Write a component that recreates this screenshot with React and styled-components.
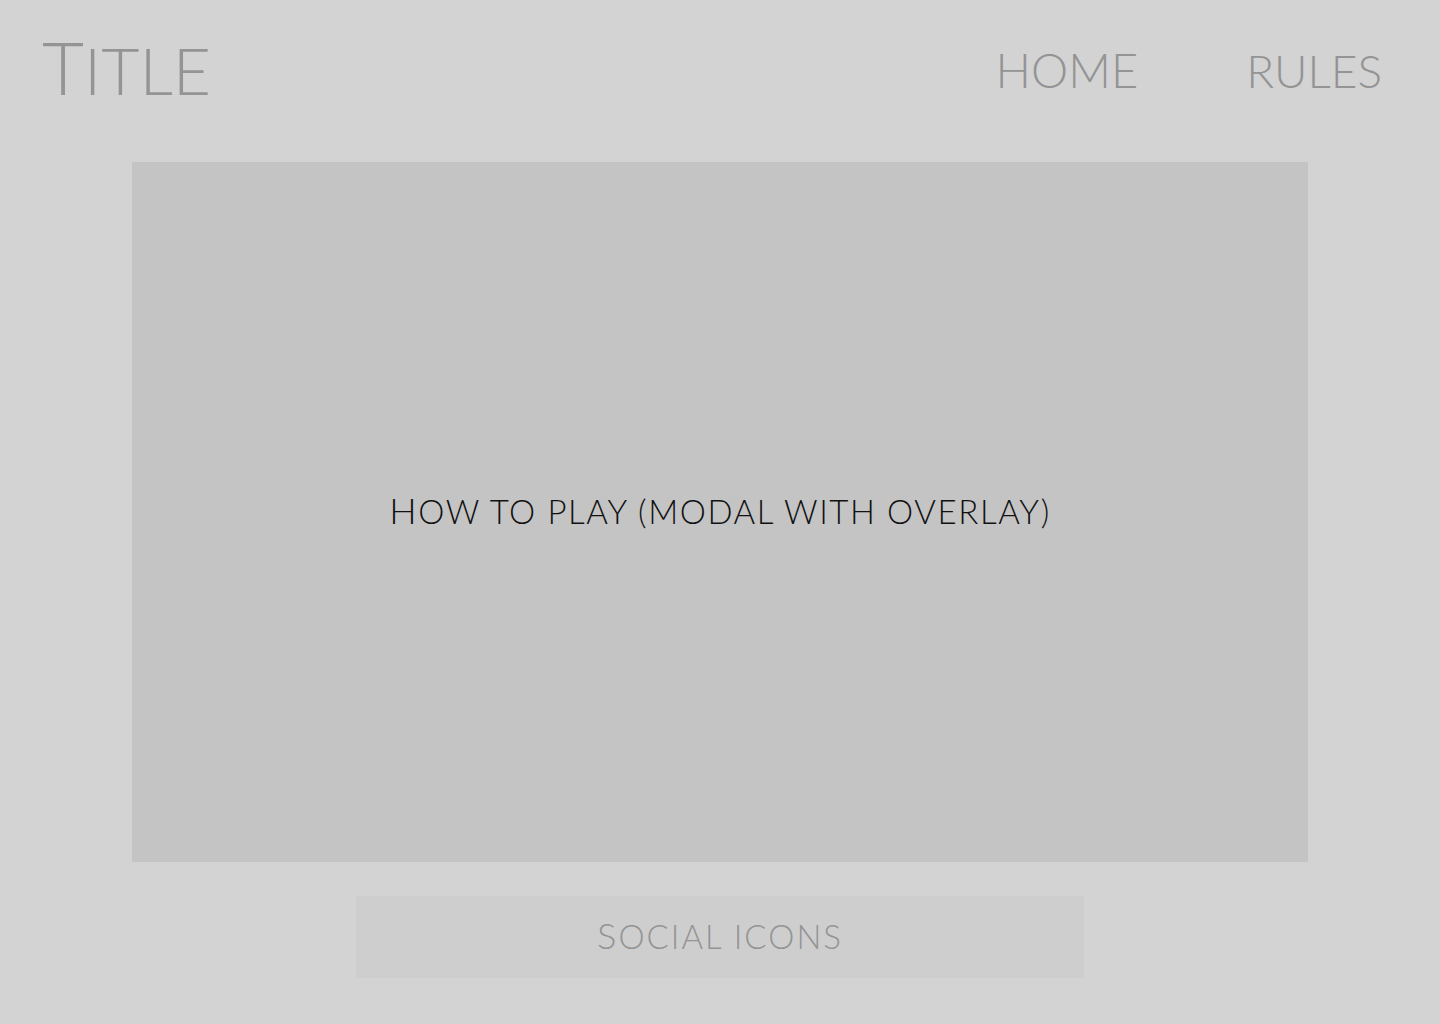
import styled, { createGlobalStyle } from 'styled-components'

const GlobalStyle = createGlobalStyle`
  html, body {
    margin: 0;
    padding: 0;
    background: #d3d3d3;
  }
  body {
    font-family: Lato, "Open Sans", "Liberation Sans", sans-serif;
    font-weight: 300;
  }
`

// Julius-style caps: everything uppercase, a leading capital slightly taller
const Caps = styled.span`
  text-transform: uppercase;
  font-size: ${(props) => props.$size}px;
  letter-spacing: ${(props) => props.$spacing || 0}px;
  color: ${(props) => props.$color || '#949494'};
  font-weight: 300;
  line-height: 1;
  white-space: nowrap;

  &::first-letter {
    font-size: ${(props) => (props.$lead ? props.$size * 1.1 : props.$size)}px;
  }
`

const Page = styled.div`
  width: 1440px;
  height: 1024px;
  display: flex;
  flex-direction: column;
  align-items: center;
  box-sizing: border-box;
`

const Header = styled.header`
  width: 100%;
  box-sizing: border-box;
  display: flex;
  justify-content: space-between;
  align-items: flex-end;
  padding: 0 58px 2px 42px;
  height: 106px;
`

const Logo = styled.div`
  display: flex;
  align-items: flex-end;
`

const Nav = styled.nav`
  display: flex;
  align-items: baseline;
  gap: 108px;
  padding-bottom: 10px;
`

const NavLink = styled.a`
  display: block;
  cursor: pointer;
`

const Modal = styled.section`
  margin-top: 56px;
  width: 1176px;
  height: 700px;
  background: #c4c4c4;
  display: flex;
  align-items: center;
  justify-content: center;
  padding-bottom: 4px;
  box-sizing: border-box;
`

const Footer = styled.footer`
  margin-top: 34px;
  width: 728px;
  height: 82px;
  background: #cecece;
  display: flex;
  align-items: center;
  justify-content: center;
  padding-bottom: 4px;
  box-sizing: border-box;
`

export default function App() {
  return (
    <>
      <GlobalStyle />
      <Page>
        <Header>
          <Logo>
            <Caps $size={66} $lead>Title</Caps>
          </Logo>
          <Nav>
            <NavLink>
              <Caps $size={47} $lead>Home</Caps>
            </NavLink>
            <NavLink>
              <Caps $size={46}>rules</Caps>
            </NavLink>
          </Nav>
        </Header>
        <Modal>
          <Caps $size={33} $spacing={1.6} $color="#111" $lead>How to play (modal with overlay)</Caps>
        </Modal>
        <Footer>
          <Caps $size={33} $spacing={2} $lead>Social icons</Caps>
        </Footer>
      </Page>
    </>
  )
}
